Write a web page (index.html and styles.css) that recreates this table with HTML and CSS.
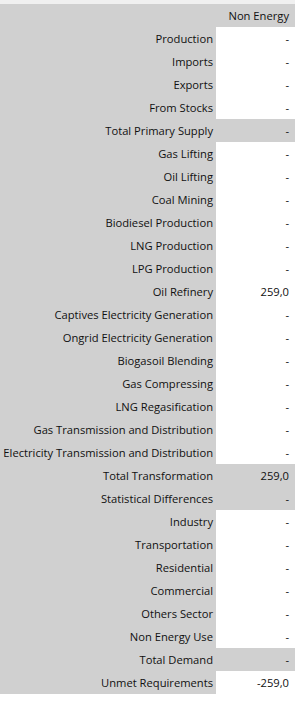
FILE: index.html
```html
<!DOCTYPE html>
<html lang="en">
<head>
  <meta charset="UTF-8" />
  <title>Energy Balance</title>
  <link rel="stylesheet" href="styles.css">
</head>
<body>
  <div class="topbar"></div>
  <table class="balance">
    <colgroup>
      <col class="label-col">
      <col class="value-col">
    </colgroup>
    <tr class="head"><th></th><th class="val">Non Energy</th></tr>
    <tr><th>Production</th><td>-</td></tr>
    <tr><th>Imports</th><td>-</td></tr>
    <tr><th>Exports</th><td>-</td></tr>
    <tr><th>From Stocks</th><td>-</td></tr>
    <tr class="total"><th>Total Primary Supply</th><td>-</td></tr>
    <tr><th>Gas Lifting</th><td>-</td></tr>
    <tr><th>Oil Lifting</th><td>-</td></tr>
    <tr><th>Coal Mining</th><td>-</td></tr>
    <tr><th>Biodiesel Production</th><td>-</td></tr>
    <tr><th>LNG Production</th><td>-</td></tr>
    <tr><th>LPG Production</th><td>-</td></tr>
    <tr><th>Oil Refinery</th><td>259,0</td></tr>
    <tr><th>Captives Electricity Generation</th><td>-</td></tr>
    <tr><th>Ongrid Electricity Generation</th><td>-</td></tr>
    <tr><th>Biogasoil Blending</th><td>-</td></tr>
    <tr><th>Gas Compressing</th><td>-</td></tr>
    <tr><th>LNG Regasification</th><td>-</td></tr>
    <tr><th>Gas Transmission and Distribution</th><td>-</td></tr>
    <tr><th>Electricity Transmission and Distribution</th><td>-</td></tr>
    <tr class="total"><th>Total Transformation</th><td>259,0</td></tr>
    <tr class="total"><th>Statistical Differences</th><td>-</td></tr>
    <tr><th>Industry</th><td>-</td></tr>
    <tr><th>Transportation</th><td>-</td></tr>
    <tr><th>Residential</th><td>-</td></tr>
    <tr><th>Commercial</th><td>-</td></tr>
    <tr><th>Others Sector</th><td>-</td></tr>
    <tr><th>Non Energy Use</th><td>-</td></tr>
    <tr class="total"><th>Total Demand</th><td>-</td></tr>
    <tr><th>Unmet Requirements</th><td>-259,0</td></tr>
  </table>
</body>
</html>
```

FILE: styles.css
```css
body {
  margin: 0;
  background: #fff;
  font-family: "Open Sans", Arial, sans-serif;
  font-size: 11.2px;
  color: #111;
}

.topbar {
  height: 4px;
  background: #f0f0f0;
}

.balance {
  width: 295px;
  table-layout: fixed;
  border-collapse: collapse;
  background: #d0d0d0;
}

.label-col {
  width: 216px;
}

.value-col {
  width: 79px;
}

.balance th,
.balance td {
  height: 23px;
  padding: 0;
  text-align: right;
  font-weight: normal;
  white-space: nowrap;
}

.balance th {
  padding-right: 3px;
}

.balance td {
  background: #fff;
  padding-right: 6px;
}

.balance .head th.val {
  padding-right: 6px;
}

.balance .total td {
  background: #d0d0d0;
}
```
